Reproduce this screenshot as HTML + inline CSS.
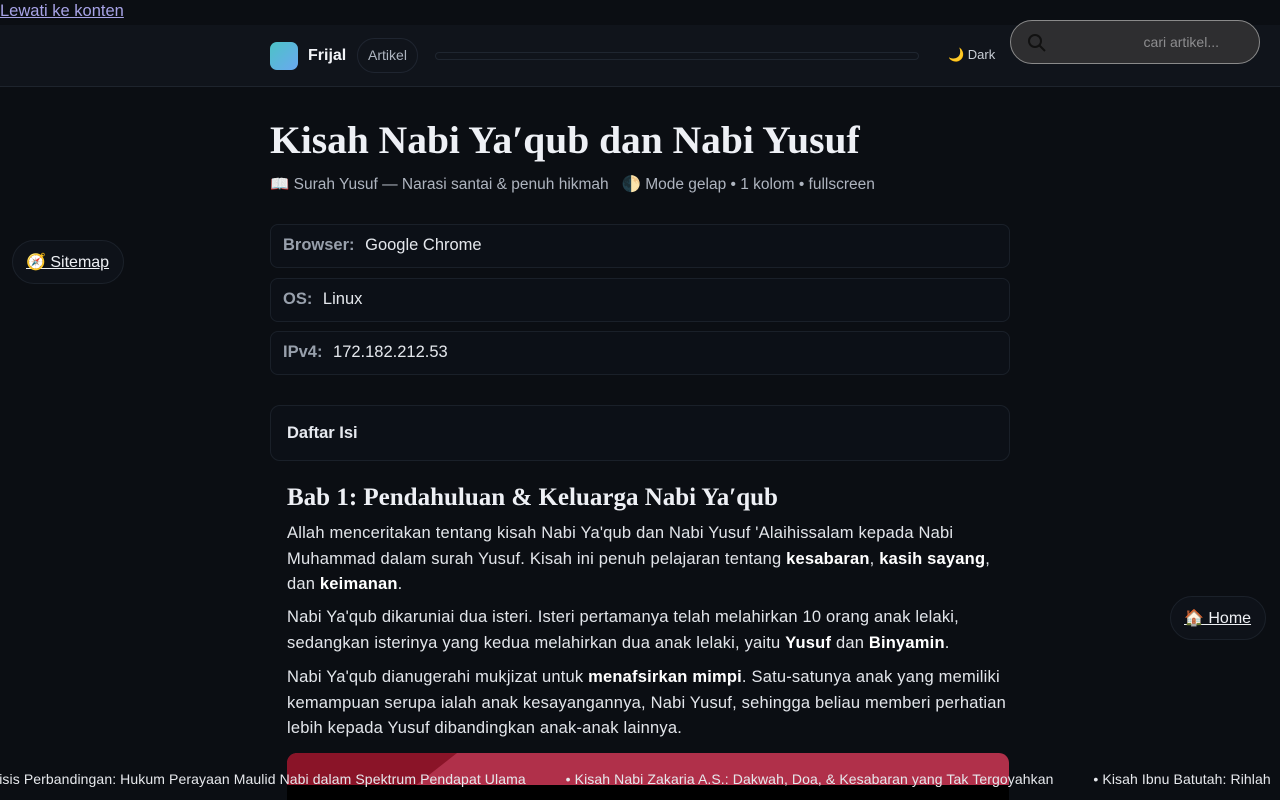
<!DOCTYPE html>
<html><head><meta charset="utf-8"><style>
*{box-sizing:border-box;margin:0;padding:0}
html,body{width:1280px;height:800px;overflow:hidden}
body{background:#0b0e13;font-family:"Liberation Sans",sans-serif;color:#e6e9ef;position:relative}
.skip{position:absolute;left:0;top:2px;font-size:16.5px;color:#a7a3e6;text-decoration:underline}
header{position:absolute;top:25px;left:0;width:1280px;height:62px;background:#10141b;border-bottom:1px solid #1e242d}
.logo{position:absolute;left:270px;top:17px;width:28px;height:28px;border-radius:7px;background:linear-gradient(135deg,#4cc3c6,#6aa8f0)}
.brand{position:absolute;left:308px;top:22px;font-weight:bold;font-size:16px;color:#f2f4f8}
.art{position:absolute;left:357px;top:13px;width:61px;height:35px;border:1px solid #1f2530;border-radius:18px;font-size:14px;color:#aeb5c0;text-align:center;line-height:33px}
.bar{position:absolute;left:435px;top:27px;width:484px;height:8px;border:1px solid #1f2630;border-radius:5px}
.dark{position:absolute;left:948px;top:22px;font-size:13px;color:#c9ced6}
.search{position:absolute;left:1010px;top:-5px;width:250px;height:44px;border-radius:22px;background:#2e2e30;border:1px solid #8a8a8a}
.search span{position:absolute;right:40px;top:13px;color:#8d8d8f;font-size:14px}
.search svg{position:absolute;left:16px;top:12px}
h1{position:absolute;left:270px;top:117px;font-family:"Liberation Serif",serif;font-size:39.5px;font-weight:bold;color:#eef0f5}
.sub{position:absolute;left:270px;top:175px;font-size:15.5px;color:#aeb4bf}
.pill{position:absolute;border-radius:22px;background:#0e1219;border:1px solid #1b212a;font-size:16px;color:#eef0f4;text-decoration:underline}
.box{position:absolute;left:270px;width:740px;height:44px;border:1px solid #1a2029;border-radius:8px;background:#0c1017;font-size:16.5px;padding:11px 12px;color:#e4e7ec}
.box b{color:#98a0ac;margin-right:6px}
.toc{position:absolute;left:270px;top:405px;width:740px;height:56px;border:1px solid #1a2029;border-radius:10px;background:#0c1017;padding:18px 16px;font-weight:bold;font-size:16.5px}
h2{position:absolute;left:287px;top:484px;font-family:"Liberation Serif",serif;font-size:25px;font-weight:bold;color:#eef0f5}
.p{position:absolute;left:287px;width:725px;font-size:16.5px;line-height:25.5px;color:#e2e5ea;letter-spacing:0.2px}
.p b{color:#fff}
.img{position:absolute;left:287px;top:753px;width:722px;height:47px;border-radius:10px 10px 0 0;overflow:hidden;background:#b0304a}
.img:before{content:"";position:absolute;left:0;top:0;width:170px;height:40px;background:#8a1428;clip-path:polygon(0 0,100% 0,70% 100%,0 100%)}
.img:after{content:"";position:absolute;left:0;top:32px;width:722px;height:40px;background:#000}
.tick{position:absolute;top:771px;left:-4px;white-space:nowrap;font-size:14px;color:#e6e8ec;letter-spacing:0.1px}
</style></head><body>
<a class="skip">Lewati ke konten</a>
<header><div class="logo"></div><div class="brand">Frijal</div><div class="art">Artikel</div><div class="bar"></div><div class="dark">🌙 Dark</div>
<div class="search"><svg width="20" height="20" viewBox="0 0 20 20"><circle cx="8" cy="8" r="6" fill="none" stroke="#111" stroke-width="2"/><path d="M12.5 12.5L18 18" stroke="#111" stroke-width="2"/></svg><span>cari artikel...</span></div></header>
<h1>Kisah Nabi Ya′qub dan Nabi Yusuf</h1>
<div class="sub">📖 Surah Yusuf — Narasi santai &amp; penuh hikmah &nbsp; 🌓 Mode gelap • 1 kolom • fullscreen</div>
<div class="pill" style="left:12px;top:240px;width:112px;height:44px;padding:11px 13px">🧭 Sitemap</div>
<div class="pill" style="left:1170px;top:596px;width:96px;height:44px;padding:11px 13px">🏠 Home</div>
<div class="box" style="top:224px"><b>Browser:</b> Google Chrome</div>
<div class="box" style="top:278px"><b>OS:</b> Linux</div>
<div class="box" style="top:331px"><b>IPv4:</b> 172.182.212.53</div>
<div class="toc">Daftar Isi</div>
<h2>Bab 1: Pendahuluan &amp; Keluarga Nabi Ya′qub</h2>
<div class="p" style="top:521px">Allah menceritakan tentang kisah Nabi Ya'qub dan Nabi Yusuf 'Alaihissalam kepada Nabi Muhammad dalam surah Yusuf. Kisah ini penuh pelajaran tentang <b>kesabaran</b>, <b>kasih sayang</b>,<br>dan <b>keimanan</b>.</div>
<div class="p" style="top:605px">Nabi Ya'qub dikaruniai dua isteri. Isteri pertamanya telah melahirkan 10 orang anak lelaki, sedangkan isterinya yang kedua melahirkan dua anak lelaki, yaitu <b>Yusuf</b> dan <b>Binyamin</b>.</div>
<div class="p" style="top:665px">Nabi Ya'qub dianugerahi mukjizat untuk <b>menafsirkan mimpi</b>. Satu-satunya anak yang memiliki kemampuan serupa ialah anak kesayangannya, Nabi Yusuf, sehingga beliau memberi perhatian lebih kepada Yusuf dibandingkan anak-anak lainnya.</div>
<div class="img"></div>
<div class="tick">lisis Perbandingan: Hukum Perayaan Maulid Nabi dalam Spektrum Pendapat Ulama &nbsp;&nbsp;&nbsp;&nbsp;&nbsp;&nbsp;&nbsp;&nbsp; • Kisah Nabi Zakaria A.S.: Dakwah, Doa, &amp; Kesabaran yang Tak Tergoyahkan &nbsp;&nbsp;&nbsp;&nbsp;&nbsp;&nbsp;&nbsp;&nbsp; • Kisah Ibnu Batutah: Rihlah</div>
</body></html>
